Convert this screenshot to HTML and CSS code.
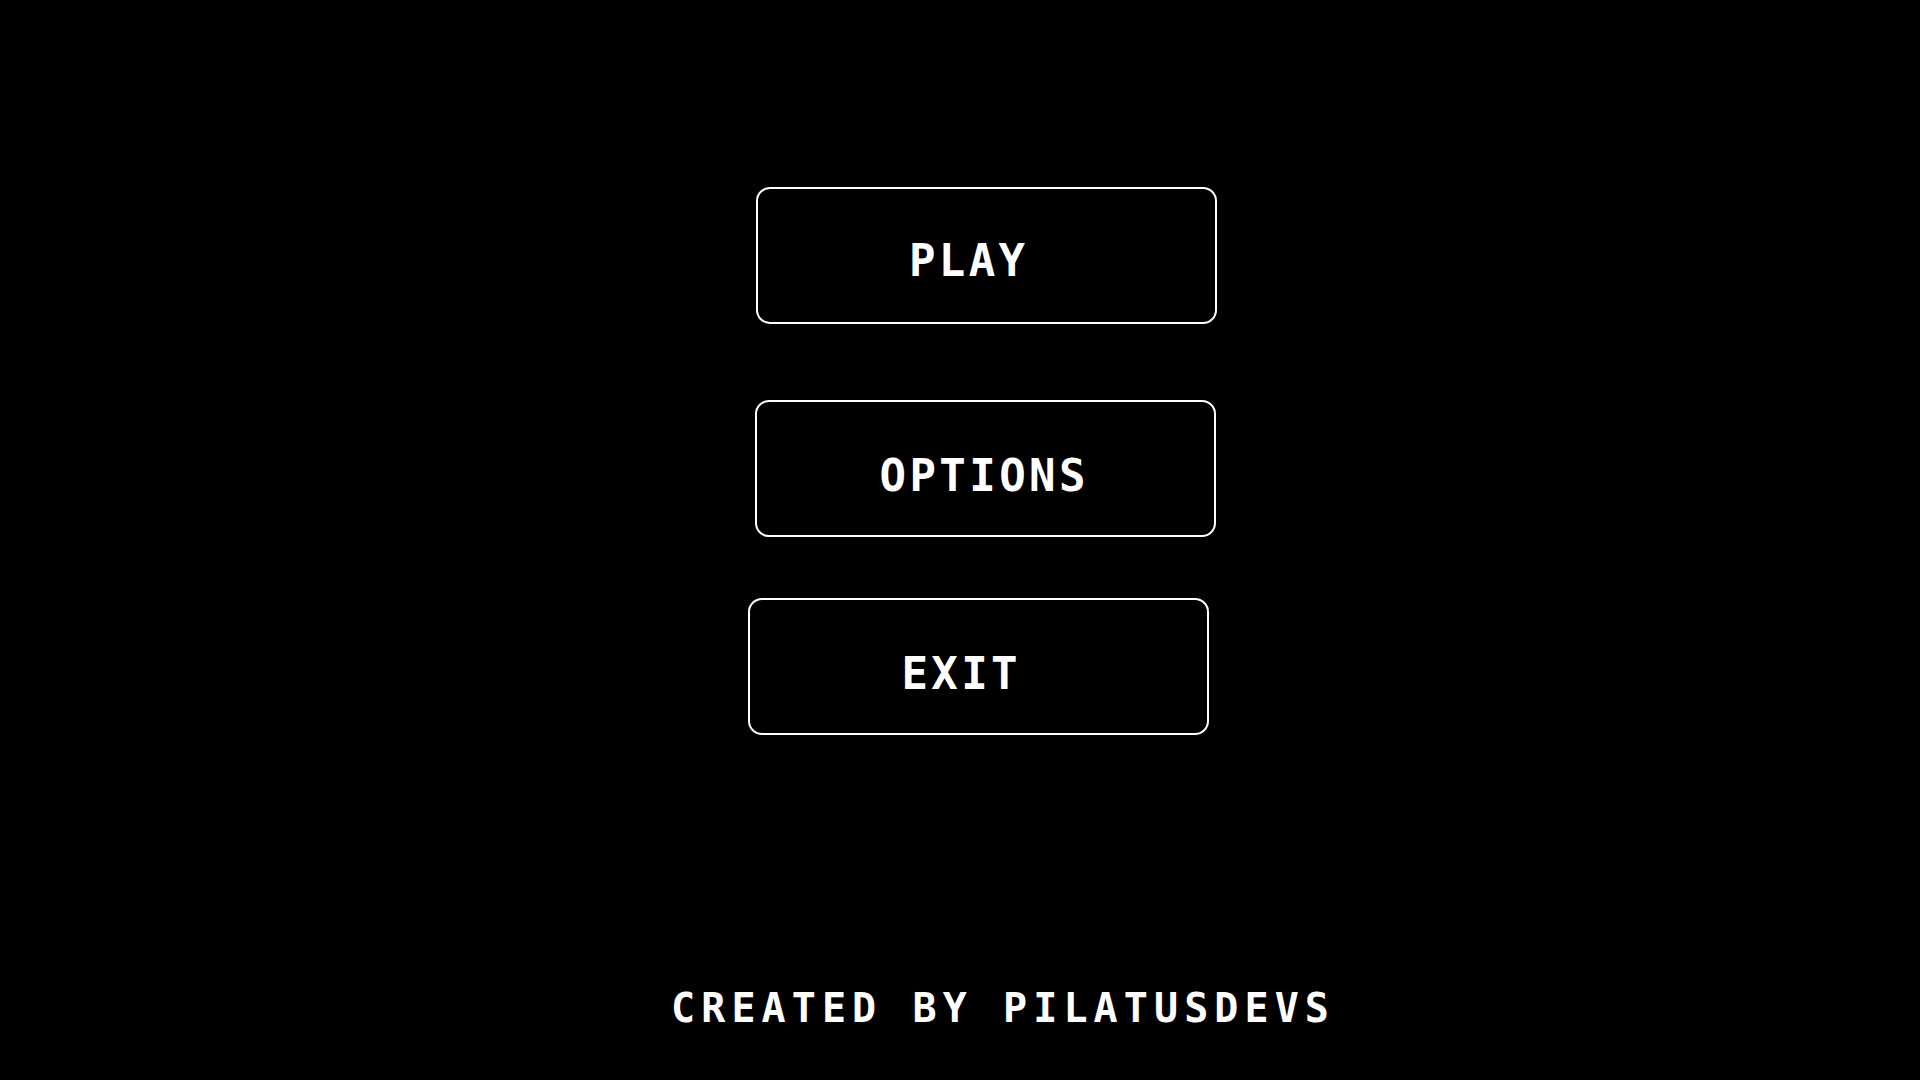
FILE: index.html
```html
<!DOCTYPE html>
<html lang="en">
<head>
<meta charset="utf-8">
<title>Main Menu</title>
<link rel="stylesheet" href="styles.css">
</head>
<body>
<main class="screen">
  <nav class="menu">
    <button class="menu-btn menu-btn--play"><span class="label label--shift">PLAY</span></button>
    <button class="menu-btn menu-btn--options"><span class="label label--nudge">OPTIONS</span></button>
    <button class="menu-btn menu-btn--exit"><span class="label label--shift">EXIT</span></button>
  </nav>
  <footer class="credits">CREATED BY PILATUSDEVS</footer>
</main>
</body>
</html>
```

FILE: styles.css
```css
html, body {
  margin: 0;
  padding: 0;
  background: #000;
}

body {
  width: 1920px;
  height: 1080px;
  overflow: hidden;
  font-family: "DejaVu Sans Mono", "Liberation Mono", monospace;
  color: #fff;
}

.screen {
  display: flex;
  flex-direction: column;
  align-items: center;
  height: 1080px;
  padding-top: 187px;
  box-sizing: border-box;
}

.menu {
  display: flex;
  flex-direction: column;
  align-items: center;
  padding-left: 51px;
}

.menu-btn {
  box-sizing: border-box;
  width: 461px;
  height: 137px;
  border: 2px solid #fff;
  border-radius: 14px;
  background: #000;
  color: #fff;
  display: flex;
  align-items: center;
  justify-content: center;
  padding: 14px 0 0 0;
  font-family: inherit;
  cursor: pointer;
}

.menu-btn--play {
  margin-left: 1px;
  padding-top: 10px;
}

.menu-btn--options {
  margin-top: 76px;
}

.menu-btn--exit {
  margin-top: 61px;
  margin-right: 14px;
}

.label {
  font-size: 44px;
  line-height: 44px;
  font-weight: bold;
  letter-spacing: 3.4px;
  padding-left: 3.4px;
}

.label--shift {
  padding-right: 38px;
}

.label--nudge {
  padding-right: 6px;
}

.credits {
  margin-top: 252px;
  font-size: 40px;
  line-height: 42px;
  font-weight: bold;
  letter-spacing: 6.1px;
  padding-left: 6.1px;
  margin-left: 80px;
}
```
